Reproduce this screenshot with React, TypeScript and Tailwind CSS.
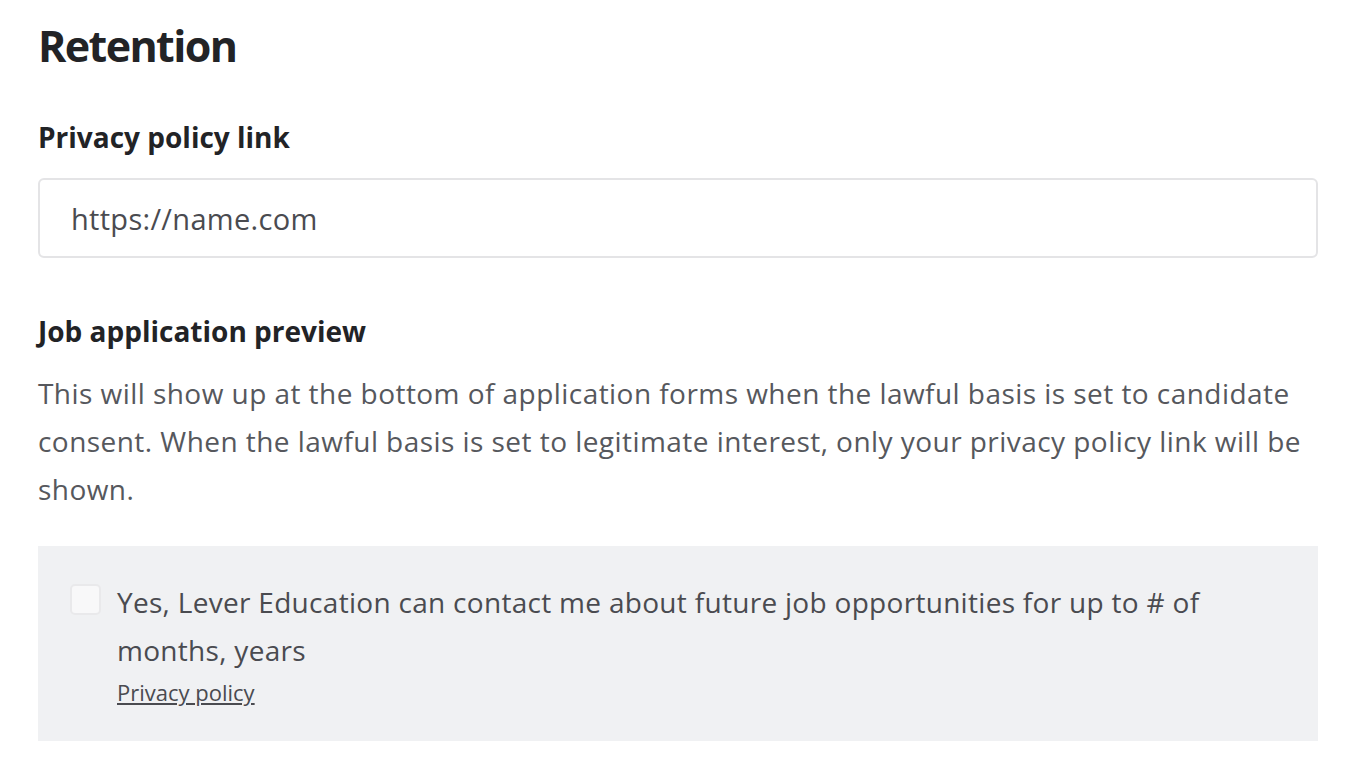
import { useState } from "react";

const font = { fontFamily: '"Open Sans", "Noto Sans", sans-serif' };

export default function App() {
  const [consent, setConsent] = useState(false);
  const [link, setLink] = useState("");

  return (
    <div className="min-h-screen bg-white px-[38px] pt-[16px]" style={font}>
      <div className="w-[1280px]">
        <h1 className="text-[43px] font-bold leading-[60px] tracking-[-1.6px] text-[#222326]">Retention</h1>

        <label className="mt-[41px] block text-[28px] font-bold leading-[40px] text-[#222326]">
          Privacy policy link
        </label>
        <input
          value={link}
          onChange={(e) => setLink(e.target.value)}
          placeholder="https://name.com"
          className="mt-[21px] block h-[80px] w-full rounded-[6px] border-2 border-[#e4e4e6] px-[31px] text-[29px] tracking-[0.3px] text-[#4a4b50] outline-none placeholder:text-[#4a4b50]"
        />

        <h2 className="mt-[53px] text-[28px] font-bold leading-[40px] text-[#222326]">
          Job application preview
        </h2>
        <p className="mt-[18px] text-[28px] leading-[48px] tracking-[0.45px] text-[#56585d]">
          This will show up at the bottom of application forms when the lawful basis is set to candidate
          consent. When the lawful basis is set to legitimate interest, only your privacy policy link will be
          shown.
        </p>

        <div className="mt-[33px] flex gap-[16px] bg-[#f0f1f3] pl-[32px] pr-[33px] pt-[32px] pb-[31px]">
          <button
            type="button"
            onClick={() => setConsent(!consent)}
            className="mt-[6px] flex h-[31px] w-[31px] shrink-0 items-center justify-center rounded-[5px] border-2 border-[#e9e9eb] bg-[#f8f8f9]"
          >
            {consent && <span className="text-[20px] leading-none text-[#4a4b50]">✓</span>}
          </button>
          <div>
            <p className="text-[28px] leading-[48px] tracking-[0.3px] text-[#4a4b50]">
              Yes, Lever Education can contact me about future job opportunities for up to # of
              <br />
              months, years
            </p>
            <a href="#" className="block text-[22px] leading-[36px] text-[#4a4b50] underline">
              Privacy policy
            </a>
          </div>
        </div>
      </div>
    </div>
  );
}
